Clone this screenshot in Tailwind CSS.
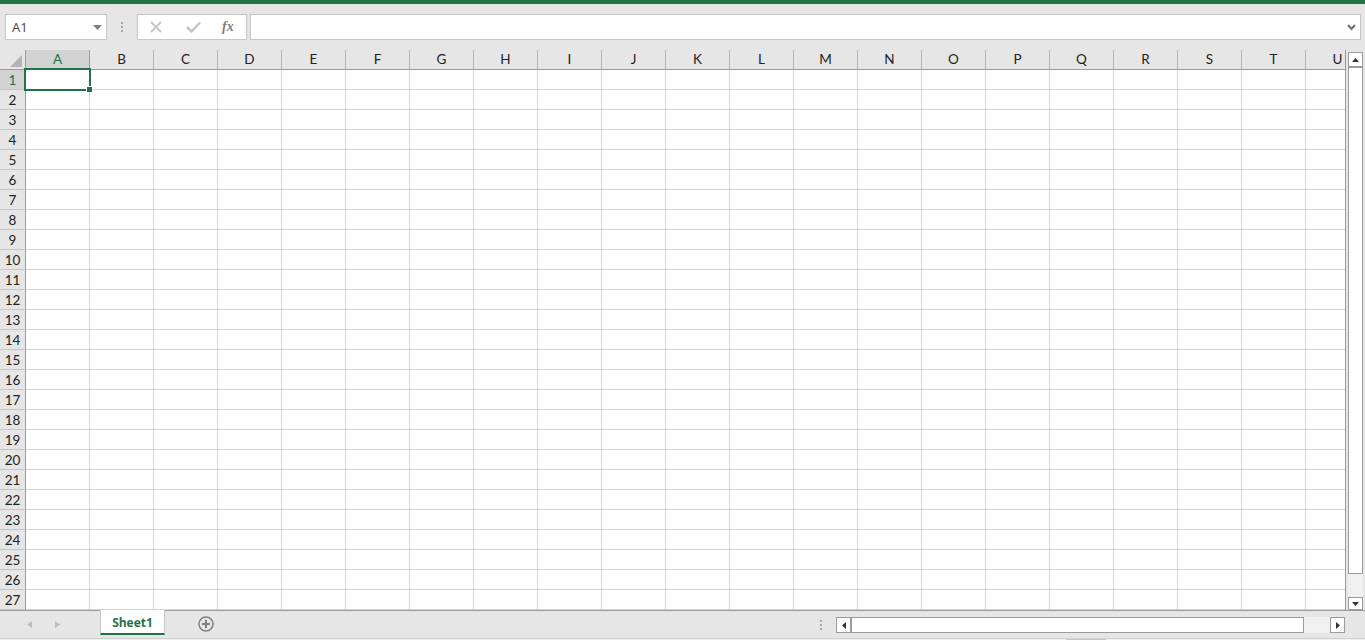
<!DOCTYPE html>
<html lang="en">

<head>
  <meta charset="UTF-8">
  <title>Sheet1 - Excel</title>
  <script src="https://cdn.jsdelivr.net/npm/@tailwindcss/browser@4"></script>
</head>

<body class="overflow-hidden bg-[#e6e6e6]">
  <div class="w-[1365px] h-[640px] flex flex-col bg-[#e6e6e6] overflow-hidden">
    <div class="h-[4px] bg-[#217346]"></div>

    <!-- formula bar -->
    <div class="h-[46px] pt-[10px] pl-[5px] flex items-start font-['Open_Sans',sans-serif]">
      <div class="w-[102px] h-[26px] bg-white border border-[#c6c6c6] flex items-center justify-between pl-[6px] pr-[4px]">
        <span class="pt-[2px] text-[13px] text-[#444444]">A1</span>
        <svg width="9" height="5" viewBox="0 0 9 5"><polygon points="0,0 9,0 4.5,5" fill="#7f7f7f" /></svg>
      </div>
      <div class="w-[30px] h-[26px] flex flex-col items-center justify-center gap-[2px]">
        <div class="w-[2px] h-[2px] bg-[#a6a6a6]"></div>
        <div class="w-[2px] h-[2px] bg-[#a6a6a6]"></div>
        <div class="w-[2px] h-[2px] bg-[#a6a6a6]"></div>
      </div>
      <div class="w-[110px] h-[26px] bg-white border border-[#c6c6c6] flex items-center pl-[12px]">
        <svg width="12" height="12" viewBox="0 0 12 12"><path d="M1 1L11 11M11 1L1 11" stroke="#c6c6c6" stroke-width="2" fill="none" /></svg>
        <svg class="ml-[24px]" width="15" height="12" viewBox="0 0 15 12"><path d="M1 6L5.500 10.500L14 1.500" stroke="#c6c6c6" stroke-width="2.500" fill="none" /></svg>
        <span class="ml-[21px] font-['Liberation_Serif',serif] italic font-bold text-[14px] leading-none text-[#7f7f7f]">fx</span>
      </div>
      <div class="ml-[3px] w-[1111px] h-[26px] bg-white border border-[#c6c6c6] flex items-center justify-end pr-[4px]">
        <svg width="9" height="7" viewBox="0 0 9 7"><path d="M1 1L4.500 5L8 1" stroke="#6f6f6f" stroke-width="2" fill="none" /></svg>
      </div>
    </div>

    <!-- sheet -->
    <div class="h-[560px] flex">
      <div class="relative w-[1346px] h-[560px] overflow-hidden bg-white border-r border-[#9b9b9b]">
        <div id="sheet" class="grid grid-cols-[26px_repeat(21,64px)] grid-rows-[repeat(28,20px)] font-['Lato',sans-serif] text-[13.500px] text-[#222222]"></div>
        <svg class="absolute left-[10px] top-[5px]" width="13" height="13" viewBox="0 0 13 13"><polygon points="12,0 12,12 0,12" fill="#b4b4b4" /></svg>
        <div class="absolute left-[24px] top-[18px] w-[67px] h-[23px] border-2 border-[#217346]"></div>
        <div class="absolute left-[87px] top-[37px] w-[5px] h-[5px] bg-[#217346] outline outline-1 outline-white"></div>
      </div>

      <!-- vertical scrollbar -->
      <div class="ml-[2px] w-[15px] flex flex-col pt-[2px] bg-[#e6e6e6]">
        <div class="h-[15px] bg-white border border-[#9b9b9b] flex items-center justify-center">
          <svg width="7" height="4" viewBox="0 0 7 4"><polygon points="3.500,0 7,4 0,4" fill="#333333" /></svg>
        </div>
        <div class="h-[507px] bg-white border border-[#9b9b9b]"></div>
        <div class="h-[23px] bg-[#f0f0f0]"></div>
        <div class="h-[13px] bg-white border border-[#9b9b9b] flex items-center justify-center">
          <svg width="7" height="4" viewBox="0 0 7 4"><polygon points="0,0 7,0 3.500,4" fill="#333333" /></svg>
        </div>
      </div>
    </div>

    <!-- sheet tabs + horizontal scrollbar -->
    <div class="h-[28px] flex items-start border-t border-[#9b9b9b] font-['Open_Sans',sans-serif]">
      <div class="w-[100px] h-[27px] flex items-center pl-[27px] gap-[23px]">
        <svg width="5" height="7" viewBox="0 0 5 7"><polygon points="5,0 5,7 0,3.500" fill="#bdbdbd" /></svg>
        <svg width="5" height="7" viewBox="0 0 5 7"><polygon points="0,0 0,7 5,3.500" fill="#bdbdbd" /></svg>
      </div>
      <div class="w-[65px] h-[25px] -mt-px pt-[2px] bg-white border-x border-[#c6c6c6] border-b-2 border-b-[#217346] flex items-center justify-center text-[12px] font-bold text-[#217346]">Sheet1</div>
      <svg class="ml-[33px] mt-[5px]" width="16" height="16" viewBox="0 0 16 16"><circle cx="8" cy="8" r="7" fill="none" stroke="#7f7f7f" stroke-width="1.500" /><path d="M8 4V12M4 8H12" stroke="#7f7f7f" stroke-width="2" /></svg>
      <div class="ml-[606px] mt-[9px] flex flex-col gap-[2px]">
        <div class="w-[2px] h-[2px] bg-[#a6a6a6]"></div>
        <div class="w-[2px] h-[2px] bg-[#a6a6a6]"></div>
        <div class="w-[2px] h-[2px] bg-[#a6a6a6]"></div>
      </div>
      <div class="ml-[14px] mt-[6px] w-[509px] h-[16px] flex bg-[#f0f0f0]">
        <div class="w-[15px] bg-white border border-[#9b9b9b] flex items-center justify-center">
          <svg width="4" height="7" viewBox="0 0 4 7"><polygon points="4,0 4,7 0,3.500" fill="#333333" /></svg>
        </div>
        <div class="w-[453px] bg-white border border-[#9b9b9b]"></div>
        <div class="w-[26px]"></div>
        <div class="w-[15px] bg-white border border-[#9b9b9b] flex items-center justify-center">
          <svg width="4" height="7" viewBox="0 0 4 7"><polygon points="0,0 0,7 4,3.500" fill="#333333" /></svg>
        </div>
      </div>
    </div>

    <div class="h-[2px] flex border-t border-[#d0d0d0] bg-[#f0f0f0]">
      <div class="ml-[1066px] w-[40px] h-[1px] bg-[#c6c6c6]"></div>
    </div>
  </div>

  <script>
    const sheet = document.getElementById("sheet")
    const letters = "ABCDEFGHIJKLMNOPQRSTU".split("")
    let html = `<div class="bg-[#e6e6e6] border-r border-b border-[#9b9b9b]"></div>`

    letters.forEach((l, i) => {
      if (i === 0) {
        html += `<div class="bg-[#d2d2d2] border-r border-b border-[#9b9b9b] flex items-center justify-center text-[#217346]">${l}</div>`
      } else {
        html += `<div class="bg-[#e6e6e6] border-r border-b border-r-[#b4b4b4] border-b-[#9b9b9b] flex items-center justify-center">${l}</div>`
      }
    })

    for (let r = 1; r <= 27; r++) {
      if (r === 1) {
        html += `<div class="pt-[2px] bg-[#d2d2d2] border-r border-b border-r-[#9b9b9b] border-b-[#c6c6c6] flex items-center justify-center text-[#217346]">${r}</div>`
      } else {
        html += `<div class="pt-[2px] bg-[#e6e6e6] border-r border-b border-r-[#9b9b9b] border-b-[#c6c6c6] flex items-center justify-center">${r}</div>`
      }
      letters.forEach(() => {
        html += `<div class="bg-white border-r border-b border-[#d4d4d4]"></div>`
      })
    }
    sheet.innerHTML = html
  </script>
</body>

</html>
